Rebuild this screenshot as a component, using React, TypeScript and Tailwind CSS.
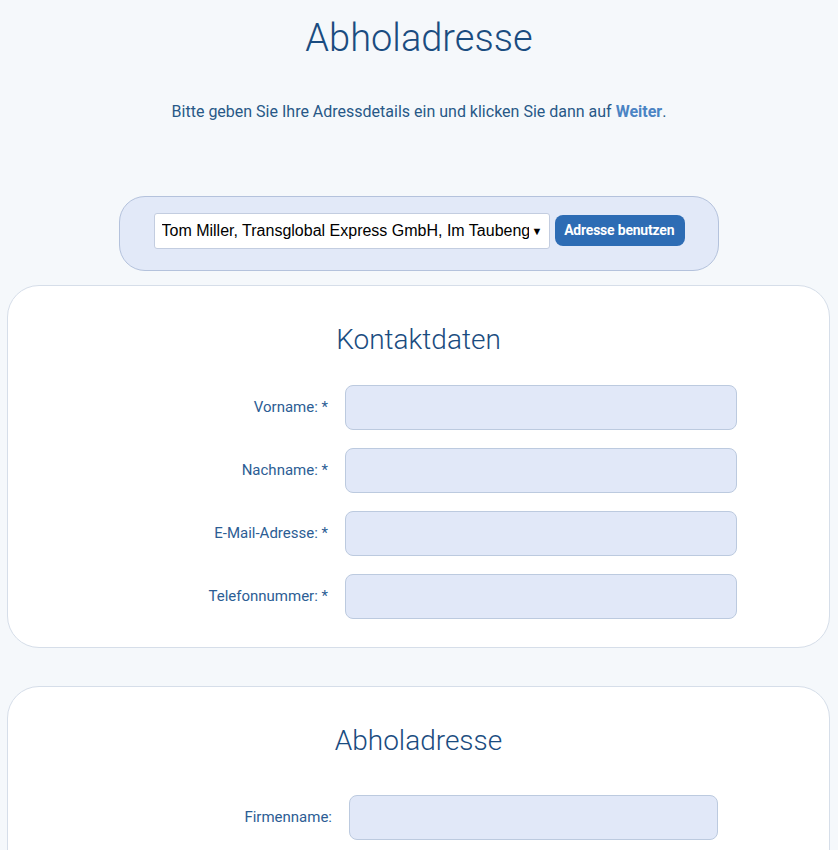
import React from 'react';

const Field = ({ label, labelWidth, inputWidth }: { label: string; labelWidth: string; inputWidth: string }) => (
  <div className="flex items-center justify-center gap-[17px]">
    <label className={`${labelWidth} text-right text-[15px] text-[#2c5d94]`}>{label}</label>
    <div className={`${inputWidth} h-[45px] rounded-[8px] border border-[#bccadf] bg-[#e1e8f8]`} />
  </div>
);

const App = () => {
  return (
    <div className="min-h-[850px] bg-[#f5f8fb] font-['Roboto',sans-serif]">
      <div className="pt-[14px] text-center">
        <h1 className="text-[38px] leading-[48px] font-light text-[#1a4c80]">Abholadresse</h1>
        <p className="mt-[38px] text-[16px] text-[#285887]">
          Bitte geben Sie Ihre Adressdetails ein und klicken Sie dann auf{' '}
          <span className="font-bold text-[#4b84c4]">Weiter</span>.
        </p>
      </div>

      {/* Saved address picker */}
      <div className="mx-auto mt-[72px] flex h-[75px] w-[600px] items-start justify-center gap-[5px] rounded-[26px] border border-[#b4c2dc] bg-[#e2e9f8] pt-[16px]">
        <div className="flex h-[36px] w-[396px] items-center justify-between rounded-[3px] border border-[#c3cde0] bg-white pl-[7px] pr-[6px] font-['Liberation_Sans',Arial,sans-serif] text-[16px] text-black">
          <span className="overflow-hidden whitespace-nowrap">Tom Miller, Transglobal Express GmbH, Im Taubeng</span>
          <span className="ml-[3px] text-[11px]">▼</span>
        </div>
        <button className="mt-[2px] flex h-[31px] w-[130px] items-center justify-center rounded-[8px] bg-[#2d6cb4] text-white">
          <span className="inline-block origin-center scale-x-[0.93] whitespace-nowrap text-[15px] font-bold tracking-[-0.2px]">
            Adresse benutzen
          </span>
        </button>
      </div>

      {/* Kontaktdaten */}
      <div className="mx-[7px] mt-[14px] mr-[8px] rounded-[32px] border border-[#d6dee9] bg-white pt-[35px] pb-[28px]">
        <h2 className="text-center text-[28px] leading-[38px] font-light text-[#1a4c80]">Kontaktdaten</h2>
        <div className="mt-[26px] flex flex-col gap-[18px]">
          <Field label="Vorname: *" labelWidth="w-[228px]" inputWidth="w-[392px]" />
          <Field label="Nachname: *" labelWidth="w-[228px]" inputWidth="w-[392px]" />
          <Field label="E-Mail-Adresse: *" labelWidth="w-[228px]" inputWidth="w-[392px]" />
          <Field label="Telefonnummer: *" labelWidth="w-[228px]" inputWidth="w-[392px]" />
        </div>
      </div>

      {/* Abholadresse */}
      <div className="mx-[7px] mt-[38px] mr-[8px] rounded-[32px] border border-[#d6dee9] bg-white pt-[35px] pb-[28px]">
        <h2 className="text-center text-[28px] leading-[38px] font-light text-[#1a4c80]">Abholadresse</h2>
        <div className="mt-[35px] flex flex-col gap-[18px]">
          <Field label="Firmenname:" labelWidth="w-[213px]" inputWidth="w-[369px]" />
          <Field label="Straße: *" labelWidth="w-[213px]" inputWidth="w-[369px]" />
        </div>
      </div>
    </div>
  );
};

export default App;
